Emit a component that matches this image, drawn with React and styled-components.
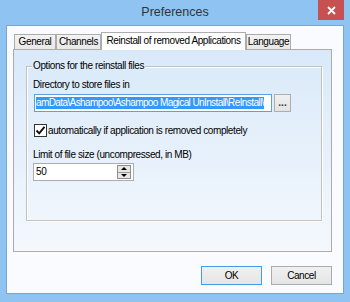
import React from 'react'
import styled, { createGlobalStyle } from 'styled-components'

const GlobalStyle = createGlobalStyle`
  html, body {
    margin: 0;
    padding: 0;
  }
  body {
    font-family: "Liberation Sans", Arial, sans-serif;
    background: #8fc3f2;
  }
`;

const tabs = [
  { label: 'General', width: 42 },
  { label: 'Channels', width: 45 },
  { label: 'Reinstall of removed Applications', width: 145, active: true },
  { label: 'Language', width: 45 },
];

const App = () => {
  return (
    <Window>
      <GlobalStyle />
      <TitleBar>
        <Title>Preferences</Title>
        <CloseButton>
          <svg width="9" height="9" viewBox="0 0 9 9">
            <path d="M1 1 L8 8 M8 1 L1 8" stroke="#fff" strokeWidth="1.8" />
          </svg>
        </CloseButton>
      </TitleBar>
      <Client>
        <TabStrip>
          {tabs.map((t) => (
            <Tab key={t.label} $active={t.active} $width={t.width}>
              {t.label}
            </Tab>
          ))}
        </TabStrip>
        <Panel>
          <GroupBox>
            <Legend>Options for the reinstall files</Legend>
            <Label>Directory to store files in</Label>
            <PathRow>
              <PathInput>
                <Selected>amData\Ashampoo\Ashampoo Magical UnInstall\ReInstall\</Selected>
              </PathInput>
              <BrowseButton>...</BrowseButton>
            </PathRow>
            <CheckRow>
              <CheckBox>
                <svg width="11" height="11" viewBox="0 0 11 11">
                  <path d="M1.5 5.5 L4.2 8.3 L9.5 1.8" fill="none" stroke="#111" strokeWidth="1.9" />
                </svg>
              </CheckBox>
              <CheckLabel>automatically if application is removed completely</CheckLabel>
            </CheckRow>
            <Label $top={12}>Limit of file size (uncompressed, in MB)</Label>
            <SpinField>
              <SpinValue>50</SpinValue>
              <SpinButtons>
                <SpinHalf><Arrow $up /></SpinHalf>
                <SpinHalf><Arrow /></SpinHalf>
              </SpinButtons>
            </SpinField>
          </GroupBox>
        </Panel>
        <ButtonRow>
          <DialogButton $default>OK</DialogButton>
          <DialogButton>Cancel</DialogButton>
        </ButtonRow>
      </Client>
    </Window>
  )
}

const Window = styled.div`
  width: 350px;
  height: 302px;
  box-sizing: border-box;
  padding: 0 6px 8px;
  background: #8fc3f2;
  display: flex;
  flex-direction: column;
`;

const TitleBar = styled.div`
  height: 25px;
  display: grid;
  grid-template-columns: 1fr auto 1fr;
  align-items: start;
`;

const Title = styled.div`
  grid-column: 2;
  font-size: 12.5px;
  line-height: 25px;
  color: #333;
`;

const CloseButton = styled.div`
  grid-column: 3;
  justify-self: end;
  width: 26px;
  height: 20px;
  background: #c75050;
  display: flex;
  align-items: center;
  justify-content: center;
`;

const Client = styled.div`
  flex: 1;
  border: 1px solid #7ba6d0;
  background: #f9fbfe;
  padding: 6px 11px 8px 6px;
  display: flex;
  flex-direction: column;
  font-size: 10px;
  letter-spacing: -0.4px;
  color: #000;
`;

const TabStrip = styled.div`
  height: 18px;
  margin-bottom: -1px;
  padding-left: 1px;
  display: flex;
  align-items: flex-start;
  position: relative;
  z-index: 1;
`;

const Tab = styled.div`
  box-sizing: border-box;
  width: ${(p) => p.$width}px;
  height: ${(p) => (p.$active ? 18 : 15)}px;
  margin-top: ${(p) => (p.$active ? 0 : 2)}px;
  border: 1px solid #acacac;
  border-bottom: none;
  background: ${(p) => (p.$active ? '#fff' : 'linear-gradient(#f3f3f3, #e9e9e9)')};
  display: flex;
  justify-content: center;
  align-items: ${(p) => (p.$active ? 'flex-start' : 'center')};
  padding-top: ${(p) => (p.$active ? 2 : 0)}px;
  line-height: 12px;
  white-space: nowrap;
`;

const Panel = styled.div`
  box-sizing: border-box;
  height: 203px;
  border: 1px solid #acacac;
  background: linear-gradient(180deg, #d9e9f9 0%, #f4f8fd 100%);
  padding: 10px 9px 0 12px;
`;

const GroupBox = styled.fieldset`
  margin: 0;
  min-width: 0;
  padding: 7px 10px 39px 6px;
  border: 1px solid #c2c2c2;
  box-shadow: inset 1px 1px 0 #fff, 1px 1px 0 #fff;
`;

const Legend = styled.legend`
  padding: 0 1px;
  margin-left: -1px;
  line-height: 12px;
  background: #dcebfa;
`;

const Label = styled.div`
  line-height: 12px;
  margin-top: ${(p) => p.$top || 0}px;
  white-space: nowrap;
`;

const PathRow = styled.div`
  display: flex;
  align-items: flex-start;
  gap: 2px;
  margin-top: 3px;
  margin-left: 1px;
`;

const PathInput = styled.div`
  box-sizing: border-box;
  width: 238px;
  height: 18px;
  border: 1px solid #5c9fe3;
  background: #fff;
  padding: 0 2px 0 1px;
  display: flex;
  align-items: center;
  overflow: hidden;
`;

const Selected = styled.span`
  background: #3399ff;
  color: #fff;
  line-height: 12px;
  letter-spacing: -0.6px;
  white-space: nowrap;
`;

const BrowseButton = styled.div`
  box-sizing: border-box;
  width: 17px;
  height: 18px;
  border: 1px solid #adadad;
  background: linear-gradient(#f0f0f0, #e3e3e3);
  display: flex;
  justify-content: center;
  align-items: center;
  font-weight: bold;
  color: #333;
  letter-spacing: 0;
  line-height: 8px;
`;

const CheckRow = styled.div`
  display: flex;
  align-items: center;
  margin-top: 12px;
  margin-left: 1px;
  height: 13px;
`;

const CheckBox = styled.div`
  box-sizing: border-box;
  width: 13px;
  height: 13px;
  border: 1px solid #333;
  background: #fff;
  display: flex;
  align-items: center;
  justify-content: center;
`;

const CheckLabel = styled.span`
  margin-left: 1px;
  line-height: 12px;
  white-space: nowrap;
`;

const SpinField = styled.div`
  box-sizing: border-box;
  width: 101px;
  height: 18px;
  margin-top: 2px;
  border: 1px solid #abadb3;
  background: #fff;
  display: flex;
  align-items: center;
  justify-content: space-between;
  padding: 0 2px 0 2px;
`;

const SpinValue = styled.span`
  line-height: 12px;
`;

const SpinButtons = styled.div`
  box-sizing: border-box;
  width: 14px;
  height: 14px;
  border: 1px solid #8f8f8f;
  background: #e6e6e6;
  display: flex;
  flex-direction: column;
`;

const SpinHalf = styled.div`
  flex: 1;
  display: flex;
  align-items: center;
  justify-content: center;
  & + & {
    border-top: 1px solid #9a9a9a;
  }
`;

const Arrow = styled.div`
  width: 0;
  height: 0;
  border-left: 3px solid transparent;
  border-right: 3px solid transparent;
  ${(p) => (p.$up ? 'border-bottom: 3px solid #000;' : 'border-top: 3px solid #000;')}
`;

const ButtonRow = styled.div`
  display: flex;
  justify-content: flex-end;
  gap: 9px;
  margin-top: 14px;
`;

const DialogButton = styled.div`
  box-sizing: border-box;
  width: 61px;
  height: 19px;
  border: 1px solid ${(p) => (p.$default ? '#4a9be6' : '#acacac')};
  background: linear-gradient(#f0f0f0, #e5e5e5);
  display: flex;
  align-items: center;
  justify-content: center;
  line-height: 12px;
  color: #000;
`;

export default App
